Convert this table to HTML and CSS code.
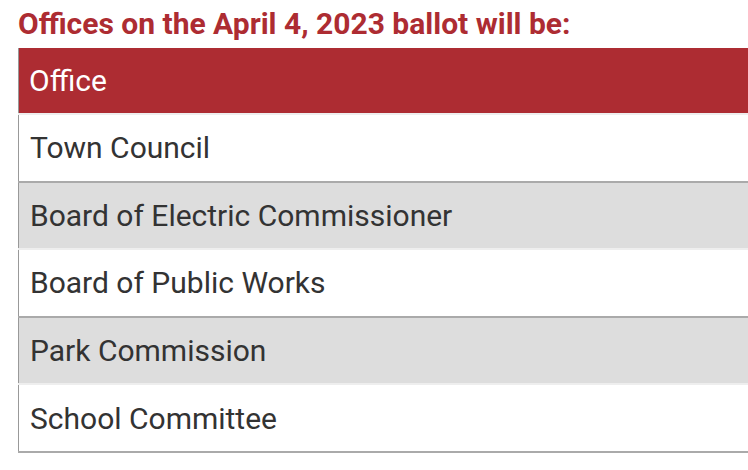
FILE: index.html
```html
<!DOCTYPE html>
<html>
<head>
<meta charset="utf-8">
<link rel="stylesheet" href="styles.css">
</head>
<body>
<div class="page">
  <h2 class="title">Offices on the April 4, 2023 ballot will be:</h2>
  <table class="offices">
    <thead>
      <tr><th>Office</th></tr>
    </thead>
    <tbody>
      <tr class="odd"><td>Town Council</td></tr>
      <tr class="even"><td>Board of Electric Commissioner</td></tr>
      <tr class="odd"><td>Board of Public Works</td></tr>
      <tr class="even"><td>Park Commission</td></tr>
      <tr class="odd"><td>School Committee</td></tr>
    </tbody>
  </table>
</div>
</body>
</html>
```

FILE: styles.css
```css
html, body {
  margin: 0;
  padding: 0;
  background: #fff;
  overflow: hidden;
}
.page {
  padding: 8px 0 0 18px;
  font-family: Roboto, "Liberation Sans", sans-serif;
}
.title {
  margin: 0 0 8px 0;
  color: #ad2c32;
  font-size: 30px;
  font-weight: 700;
  line-height: 32px;
}
.offices {
  width: 800px;
  border-collapse: collapse;
  border-left: 1px solid #999;
  border-bottom: 2px solid #aaa;
}
.offices th {
  background: #ad2c32;
  color: #fff;
  text-align: left;
  font-weight: 400;
  font-size: 30px;
  height: 65px;
  padding: 0 10px;
  border-bottom: 2px solid #eee;
}
.offices td {
  color: #333;
  font-size: 30px;
  height: 65.6px;
  padding: 0 11px;
}
.offices tr.odd td { background: #fff; }
.offices tr.even td { background: #ddd; }
.offices tr.odd + tr.even td { border-top: 2px solid #aaa; }
.offices tr.even + tr.odd td { border-top: 2px solid #eee; }
```
